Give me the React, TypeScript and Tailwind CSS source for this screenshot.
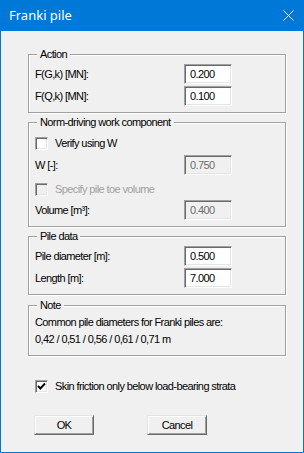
import type { ReactNode } from 'react'

function GroupBox({ title, className, children }: { title: string; className?: string; children: ReactNode }) {
  return (
    <div
      className={`relative ml-[27px] w-[258px] border border-[#a0a0a0] shadow-[inset_1px_1px_0_#fff,1px_1px_0_#fff] pl-[6px] ${className ?? ''}`}
    >
      <span className="absolute left-[8px] -top-[8px] bg-[#f0f0f0] px-[3px] leading-[14px]">{title}</span>
      {children}
    </div>
  )
}

function Field({ value, disabled }: { value: string; disabled?: boolean }) {
  return (
    <div
      className={`flex h-[20px] w-[48px] items-center border border-t-[#a0a0a0] border-l-[#a0a0a0] border-b-white border-r-white pl-[5px] shadow-[inset_1px_1px_0_#696969,inset_-1px_-1px_0_#e3e3e3] ${
        disabled ? 'bg-[#f0f0f0] text-[#6d6d6d]' : 'bg-white text-black'
      }`}
    >
      {value}
    </div>
  )
}

function Row({ label, value, disabled }: { label: string; value: string; disabled?: boolean }) {
  return (
    <div className="flex h-[20px] items-center">
      <span className="w-[149px]">{label}</span>
      <Field value={value} disabled={disabled} />
    </div>
  )
}

function CheckBox({ label, checked, disabled }: { label: string; checked?: boolean; disabled?: boolean }) {
  return (
    <div className="flex h-[20px] items-center gap-[7px]">
      <span
        className={`flex h-[13px] w-[13px] items-center justify-center border border-t-[#a0a0a0] border-l-[#a0a0a0] border-b-white border-r-white shadow-[inset_1px_1px_0_#696969,inset_-1px_-1px_0_#e3e3e3] ${
          disabled ? 'bg-[#f0f0f0]' : 'bg-white'
        }`}
      >
        {checked && (
          <svg width="9" height="9" viewBox="0 0 9 9">
            <path d="M1 4 L3.3 6.5 L8 1.5" fill="none" stroke="#000" strokeWidth="1.9" />
          </svg>
        )}
      </span>
      <span className={disabled ? 'text-[#a0a0a0]' : 'text-black'}>{label}</span>
    </div>
  )
}

function Btn({ children }: { children: ReactNode }) {
  return (
    <button className="flex h-[20px] w-[60px] items-center justify-center border border-t-[#e3e3e3] border-l-[#e3e3e3] border-b-[#696969] border-r-[#696969] bg-[#f0f0f0] shadow-[inset_1px_1px_0_#fff,inset_-1px_-1px_0_#a0a0a0] text-black">
      {children}
    </button>
  )
}

export default function App() {
  return (
    <div className="flex h-[453px] w-[304px] flex-col border-x border-b border-[#0078d7] bg-[#f0f0f0] font-['Liberation_Sans',Arial,sans-serif] text-[11px] tracking-[-0.6px] text-black">
      <div className="flex h-[31px] shrink-0 items-center justify-between bg-[#0078d7] pl-[8px] pr-[9px] text-white">
        <span className="font-['Noto_Sans',sans-serif] text-[13px] tracking-normal">Franki pile</span>
        <svg width="11" height="11" viewBox="0 0 11 11">
          <path d="M0.5 0.5 L10.5 10.5 M10.5 0.5 L0.5 10.5" stroke="#fff" strokeWidth="1" />
        </svg>
      </div>

      <GroupBox title="Action" className="mt-[23px] pt-[9px] pb-[6px]">
        <div className="flex flex-col gap-[2px]">
          <Row label="F(G,k) [MN]:" value="0.200" />
          <Row label="F(Q,k) [MN]:" value="0.100" />
        </div>
      </GroupBox>

      <GroupBox title="Norm-driving work component" className="mt-[9px] pt-[10px] pb-[6px]">
        <CheckBox label="Verify using W" />
        <div className="mt-[2px]">
          <Row label="W [-]:" value="0.750" disabled />
        </div>
        <div className="mt-[4px]">
          <CheckBox label="Specify pile toe volume" disabled />
        </div>
        <div className="mt-[1px]">
          <Row label="Volume [m³]:" value="0.400" disabled />
        </div>
      </GroupBox>

      <GroupBox title="Pile data" className="mt-[9px] pt-[9px] pb-[6px]">
        <div className="flex flex-col gap-[2px]">
          <Row label="Pile diameter [m]:" value="0.500" />
          <Row label="Length [m]:" value="7.000" />
        </div>
      </GroupBox>

      <GroupBox title="Note" className="mt-[10px] pt-[8px] pb-[7px]">
        <p className="leading-[17px]">Common pile diameters for Franki piles are:</p>
        <p className="leading-[17px]">0,42 / 0,51 / 0,56 / 0,61 / 0,71 m</p>
      </GroupBox>

      <div className="ml-[34px] mt-[20px]">
        <CheckBox label="Skin friction only below load-bearing strata" checked />
      </div>

      <div className="ml-[33px] mt-[19px] flex gap-[53px]">
        <Btn>OK</Btn>
        <Btn>Cancel</Btn>
      </div>
    </div>
  )
}
